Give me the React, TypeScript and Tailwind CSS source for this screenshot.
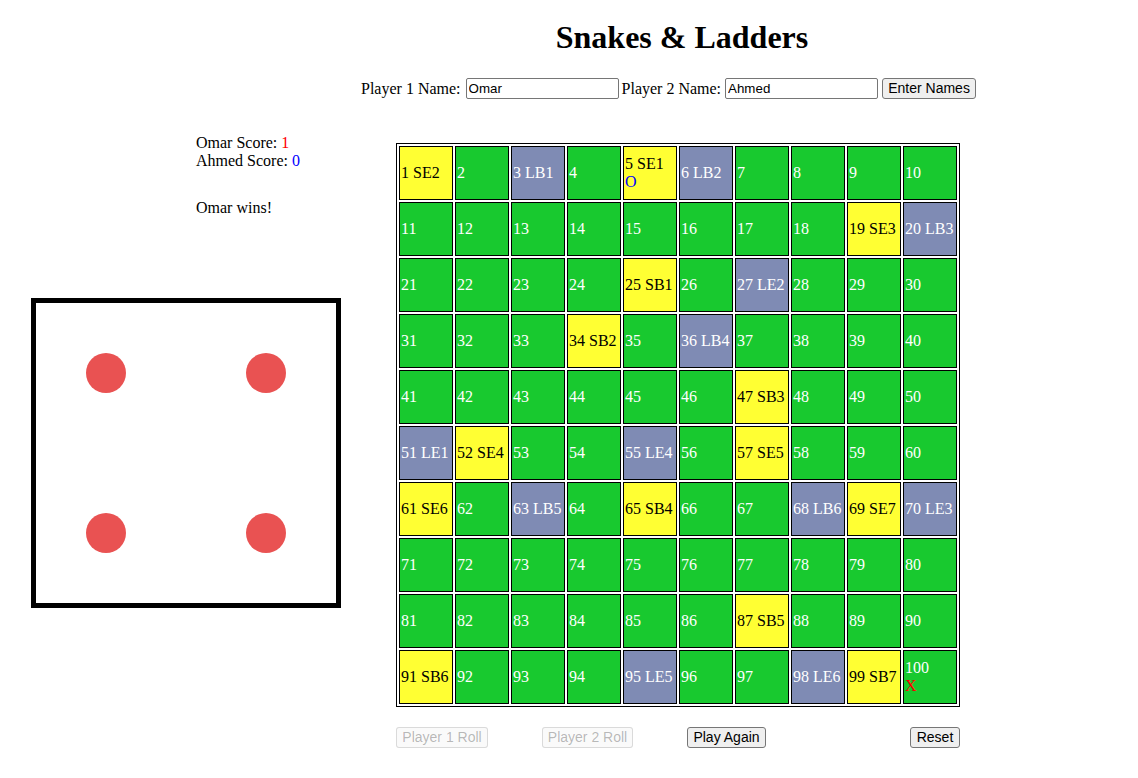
import React from "react";

const YELLOW: Record<number, string> = {
  1: "SE2", 5: "SE1", 19: "SE3", 25: "SB1", 34: "SB2", 47: "SB3", 52: "SE4", 57: "SE5",
  61: "SE6", 65: "SB4", 69: "SE7", 87: "SB5", 91: "SB6", 99: "SB7",
};
const GRAY: Record<number, string> = {
  3: "LB1", 6: "LB2", 20: "LB3", 27: "LE2", 36: "LB4", 51: "LE1", 55: "LE4", 63: "LB5",
  68: "LB6", 70: "LE3", 95: "LE5", 98: "LE6",
};

function Cell({ n }: { n: number }) {
  const y = YELLOW[n];
  const g = GRAY[n];
  const bg = y ? "bg-[#ffff33] text-black" : g ? "bg-[#7f8bb4] text-white" : "bg-[#18c92f] text-white";
  const label = y ? `${n} ${y}` : g ? `${n} ${g}` : `${n}`;
  return (
    <div className={`w-[54px] h-[54px] border border-black p-[1px] flex flex-col justify-center leading-[18px] whitespace-nowrap ${bg}`}>
      <span>{label}</span>
      {n === 5 && <span className="text-[#0000ff]">O</span>}
      {n === 100 && <span className="text-[#ff0000]">X</span>}
    </div>
  );
}

const btn =
  "h-[21px] px-0 text-center rounded-[3px] border border-[#767676] bg-[#efefef] text-[14px] text-black leading-[17px]";
const btnDisabled =
  "h-[21px] px-0 text-center rounded-[3px] border border-[#76767640] bg-[#efefef4d] text-[14px] text-[#1010104d] leading-[17px]";
const inputCls =
  "w-[153px] h-[21px] border border-[#767676] rounded-[2px] px-[2px] text-[13.33px] text-black bg-white outline-none";
const sans = { fontFamily: '"Liberation Sans", Arial, sans-serif' };

export default function App() {
  const nums = Array.from({ length: 100 }, (_, i) => i + 1);
  return (
    <div className="w-[1138px] h-[778px] bg-white text-black text-[16px] overflow-hidden" style={{ fontFamily: '"Liberation Serif", "Times New Roman", serif' }}>
      <div className="pl-[226px]">
        <h1 className="mt-[19px] text-center text-[32px] leading-[37px] font-bold">Snakes &amp; Ladders</h1>
      </div>
      <div className="mt-[22px] pl-[361px] flex items-center h-[21px] whitespace-nowrap">
        <span>Player 1 Name:</span>
        <input className={`${inputCls} ml-[5px]`} style={sans} defaultValue="Omar" />
        <span className="ml-[3px]">Player 2 Name:</span>
        <input className={`${inputCls} ml-[4px]`} style={sans} defaultValue="Ahmed" />
        <button className={`${btn} ml-[4px] w-[94px]`} style={sans}>Enter Names</button>
      </div>
      <div className="mt-[35px] flex items-start">
        <div className="w-[396px] shrink-0">
          <div className="pl-[196px] leading-[18px]">
            <div>
              Omar Score: <span className="text-[#ff0000]">1</span>
            </div>
            <div>
              Ahmed Score: <span className="text-[#0000ff]">0</span>
            </div>
            <div className="mt-[29px]">Omar wins!</div>
          </div>
          <div className="mt-[81px] ml-[31px] w-[310px] h-[310px] border-[5px] border-black flex flex-col justify-between p-[50px]">
            <div className="flex justify-between">
              <div className="w-[40px] h-[40px] rounded-full bg-[#e95252]" />
              <div className="w-[40px] h-[40px] rounded-full bg-[#e95252]" />
            </div>
            <div className="flex justify-between">
              <div className="w-[40px] h-[40px] rounded-full bg-[#e95252]" />
              <div className="w-[40px] h-[40px] rounded-full bg-[#e95252]" />
            </div>
          </div>
        </div>
        <div className="pt-[9px] w-[564px]">
          <div className="w-[564px] border border-black p-[2px] grid grid-cols-[repeat(10,54px)] gap-[2px]">
            {nums.map((n) => (
              <Cell key={n} n={n} />
            ))}
          </div>
          <div className="mt-[20px] flex items-center" style={sans}>
            <button className={`${btnDisabled} w-[92px]`} disabled>Player 1 Roll</button>
            <button className={`${btnDisabled} w-[91px] ml-[54px]`} disabled>Player 2 Roll</button>
            <button className={`${btn} w-[79px] ml-[54px]`}>Play Again</button>
            <button className={`${btn} w-[50px] ml-auto`}>Reset</button>
          </div>
        </div>
      </div>
    </div>
  );
}
